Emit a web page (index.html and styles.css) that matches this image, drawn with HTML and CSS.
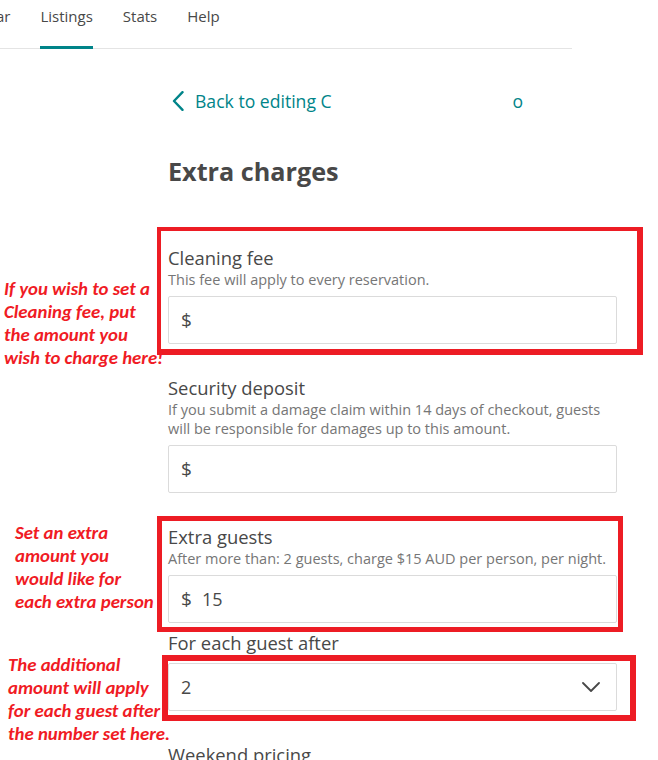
FILE: index.html
```html
<!DOCTYPE html>
<html lang="en">
<head>
<meta charset="utf-8">
<title>Extra charges</title>
<link rel="stylesheet" href="styles.css">
</head>
<body>
<div class="page">
  <nav class="topnav">
    <span class="nav-item nav-cut">ar</span>
    <span class="nav-item active">Listings</span>
    <span class="nav-item">Stats</span>
    <span class="nav-item">Help</span>
  </nav>

  <main class="content">
    <a class="back" href="#">
      <svg class="back-icon" width="12" height="20" viewBox="0 0 12 20"><path d="M10.5 1.2 L2 10 L10.5 18.8" fill="none" stroke="#008489" stroke-width="2.4" stroke-linecap="round" stroke-linejoin="round"/></svg>
      <span class="back-text">Back to editing C</span>
      <span class="back-tail">o</span>
    </a>

    <h1 class="title">Extra charges</h1>

    <section class="field">
      <div class="label">Cleaning fee</div>
      <div class="help">This fee will apply to every reservation.</div>
      <div class="input"><span class="cur">$</span></div>
    </section>

    <section class="field">
      <div class="label">Security deposit</div>
      <div class="help">If you submit a damage claim within 14 days of checkout, guests will be responsible for damages up to this amount.</div>
      <div class="input"><span class="cur">$</span></div>
    </section>

    <section class="field">
      <div class="label">Extra guests</div>
      <div class="help">After more than: 2 guests, charge $15 AUD per person, per night.</div>
      <div class="input"><span class="cur">$</span><span class="val">15</span></div>
      <div class="label sub-label">For each guest after</div>
      <div class="input select"><span class="val-sel">2</span>
        <svg class="caret" width="18" height="10" viewBox="0 0 18 10"><path d="M1 1 L9 9 L17 1" fill="none" stroke="#484848" stroke-width="1.8" stroke-linecap="round" stroke-linejoin="round"/></svg>
      </div>
    </section>

    <section class="field">
      <div class="label">Weekend pricing</div>
    </section>
  </main>

  <div class="annot-layer">
    <div class="rbox rbox1"></div>
    <div class="rbox rbox2"></div>
    <div class="rbox rbox3"></div>
    <p class="note note1">If you wish to set a<br>Cleaning fee, put<br>the amount you<br>wish to charge here!</p>
    <p class="note note2">Set an extra<br>amount you<br>would like for<br>each extra person</p>
    <p class="note note3">The additional<br>amount will apply<br>for each guest after<br>the number set here.</p>
  </div>
</div>
</body>
</html>
```

FILE: styles.css
```css
html, body {
  margin: 0;
  padding: 0;
  background: #ffffff;
}
body {
  font-family: "Open Sans", "Lato", sans-serif;
  color: #484848;
  overflow: hidden;
}
.page {
  position: relative;
  width: 658px;
  height: 760px;
  overflow: hidden;
}

/* top navigation */
.topnav {
  display: flex;
  align-items: flex-start;
  gap: 30px;
  width: 576px;
  height: 49px;
  border-bottom: 1px solid #e4e4e4;
  margin-left: -4px;
  box-sizing: border-box;
}
.nav-item {
  font-size: 15px;
  line-height: 20px;
  padding-top: 6px;
  height: 40px;
  box-sizing: border-box;
  color: #484848;
  border-bottom: 3px solid transparent;
}
.nav-item.active {
  border-bottom-color: #008489;
  height: 49px;
}

/* content */
.content {
  padding-left: 168px;
  width: 449px;
}
.back {
  display: flex;
  align-items: center;
  height: 24px;
  margin-top: 40px;
  text-decoration: none;
  color: #008489;
  font-size: 17.6px;
  margin-left: 4px;
}
.back-icon {
  display: block;
}
.back-text {
  margin-left: 11px;
}
.back-tail {
  margin-left: 181px;
}
.title {
  margin: 41px 0 0 0;
  font-size: 25.2px;
  line-height: 34px;
  font-weight: 700;
  color: #484848;
}

.field {
  margin-top: 32px;
}
.field:first-of-type {
  margin-top: 58px;
}
.label {
  font-size: 18.4px;
  line-height: 24px;
  color: #484848;
}
.help {
  font-size: 14.5px;
  line-height: 19px;
  color: #767676;
}
.input {
  margin-top: 7px;
  height: 48px;
  box-sizing: border-box;
  border: 1px solid #dbdbdb;
  border-radius: 2px;
  display: flex;
  align-items: center;
  padding-left: 12px;
}
.cur {
  font-size: 19px;
  color: #484848;
}
.val {
  margin-left: 10px;
  font-size: 18px;
  color: #484848;
}
.sub-label {
  margin-top: 8px;
}
.select {
  justify-content: space-between;
  padding-right: 16px;
  margin-top: 8px;
}
.val-sel {
  font-size: 18px;
  color: #484848;
}
.caret {
  display: block;
}

/* annotation overlay */
.annot-layer {
  position: absolute;
  inset: 0;
  pointer-events: none;
}
.rbox {
  position: absolute;
  border: 5px solid #ed1c24;
  box-sizing: border-box;
}
.rbox1 { left: 157px; top: 227px; width: 486px; height: 128px; border-width: 4px 6px 6px 4px; }
.rbox2 { left: 157px; top: 516px; width: 466px; height: 116px; }
.rbox3 { left: 162px; top: 655px; width: 474px; height: 66px; border-width: 6px; }

.note {
  position: absolute;
  margin: 0;
  font-family: "Carlito", "Lato", sans-serif;
  font-style: italic;
  font-weight: 700;
  font-size: 18.8px;
  line-height: 23px;
  color: #f01b24;
  white-space: nowrap;
}
.note1 { left: 4px; top: 277px; }
.note2 { left: 15px; top: 521px; }
.note3 { left: 8px; top: 653px; }
```
